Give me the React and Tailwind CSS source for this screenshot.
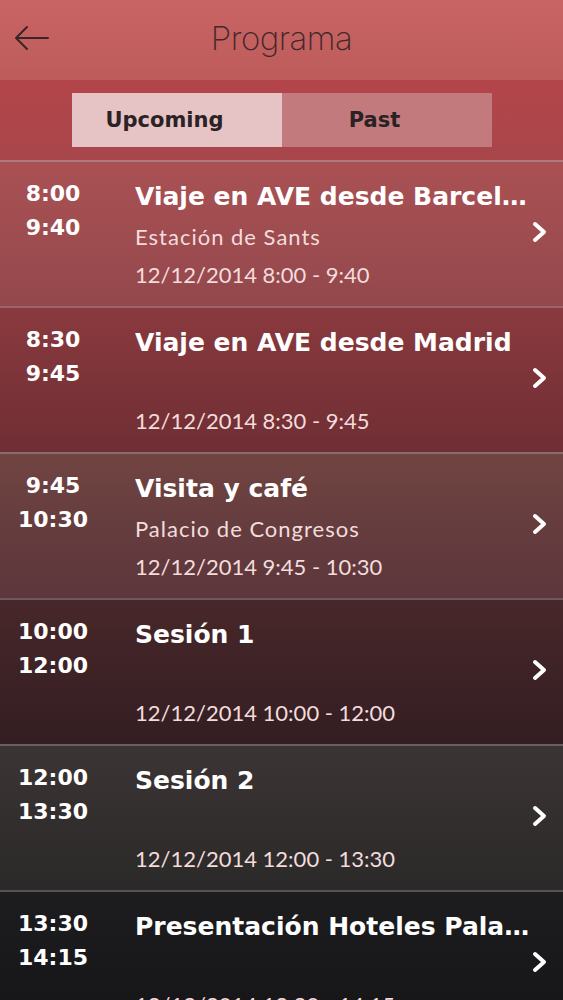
import React from "react";

const rows = [
  { t1: "8:00", t2: "9:40", title: "Viaje en AVE desde Barcelona Sants", sub: "Estación de Sants", date: "12/12/2014 8:00 - 9:40", bg: "bg-gradient-to-b from-[#aa5154] to-[#93484c]" },
  { t1: "8:30", t2: "9:45", title: "Viaje en AVE desde Madrid", sub: "", date: "12/12/2014 8:30 - 9:45", bg: "bg-gradient-to-b from-[#8a3a3e] to-[#6f2e34]" },
  { t1: "9:45", t2: "10:30", title: "Visita y café", sub: "Palacio de Congresos", date: "12/12/2014 9:45 - 10:30", bg: "bg-gradient-to-b from-[#704441] to-[#5c363c]" },
  { t1: "10:00", t2: "12:00", title: "Sesión 1", sub: "", date: "12/12/2014 10:00 - 12:00", bg: "bg-gradient-to-b from-[#48272a] to-[#331e22]" },
  { t1: "12:00", t2: "13:30", title: "Sesión 2", sub: "", date: "12/12/2014 12:00 - 13:30", bg: "bg-gradient-to-b from-[#3c3434] to-[#2b2929]" },
  { t1: "13:30", t2: "14:15", title: "Presentación Hoteles Palacio de Congresos", sub: "", date: "12/12/2014 13:30 - 14:15", bg: "bg-gradient-to-b from-[#1d1c1e] to-[#151517]" },
];

const bold = { fontFamily: "'DejaVu Sans', Lato, sans-serif" };

function Chevron() {
  return (
    <svg width="20" height="22" viewBox="0 0 20 22" fill="none">
      <path d="M5 3 L14 11 L5 19" stroke="white" strokeWidth="4" strokeLinecap="round" strokeLinejoin="round" />
    </svg>
  );
}

export default function App() {
  return (
    <div className="w-[563px] h-[1000px] overflow-hidden bg-[#151517]" style={{ fontFamily: "Lato, 'Noto Sans', sans-serif" }}>
      {/* Header */}
      <div className="h-[80px] bg-gradient-to-b from-[#c96564] to-[#bd5b5b] flex items-center relative">
        <div className="absolute left-[14px] top-[24px]">
          <svg width="36" height="28" viewBox="0 0 36 28" fill="none">
            <path d="M2 14 H34 M13 3 L2 14 L13 25" stroke="#3c2526" strokeWidth="2" strokeLinecap="round" strokeLinejoin="round" />
          </svg>
        </div>
        <div className="flex-1 text-center text-[33px] font-extralight text-[#43282a] tracking-[-0.5px] pb-[2px]" style={{ fontFamily: "Inter, 'Open Sans', sans-serif" }}>
          Programa
        </div>
      </div>
      {/* Tabs */}
      <div className="h-[80px] bg-gradient-to-b from-[#b3454a] to-[#a8464b] flex items-start justify-center pt-[13px]">
        <div className="flex w-[420px] h-[54px]">
          <div className="flex-1 bg-[#e6c3c5] flex items-center justify-center pr-[24px] pt-[2px] text-[21px] font-bold text-[#2a2224]" style={bold}>Upcoming</div>
          <div className="flex-1 bg-[#c37a7d] flex items-center justify-center pr-[24px] pt-[2px] text-[21px] font-bold text-[#2a2224]" style={bold}>Past</div>
        </div>
      </div>
      {/* Rows */}
      {rows.map((r, i) => (
        <div key={i} className={`h-[146px] border-t-2 border-[#ffffff45] flex ${r.bg}`}>
          <div className="w-[106px] shrink-0 flex flex-col items-center pt-[15px] text-white font-bold text-[22px] leading-[34px]" style={bold}>
            <div>{r.t1}</div>
            <div>{r.t2}</div>
          </div>
          <div className="flex-1 min-w-0 pl-[29px] pt-[17px]">
            <div className="text-white font-bold text-[25px] leading-[36px] truncate" style={bold}>{r.title}</div>
            <div className="text-[#f3dcdc] text-[22px] leading-[38px] h-[38px] pt-[3px] tracking-[1px]">{r.sub}</div>
            <div className="text-[#f3dcdc] text-[22px] leading-[38px] pt-[3px]">{r.date}</div>
          </div>
          <div className="w-[33px] shrink-0 flex items-center justify-start pb-[4px] -ml-[2px]">
            <Chevron />
          </div>
        </div>
      ))}
    </div>
  );
}
